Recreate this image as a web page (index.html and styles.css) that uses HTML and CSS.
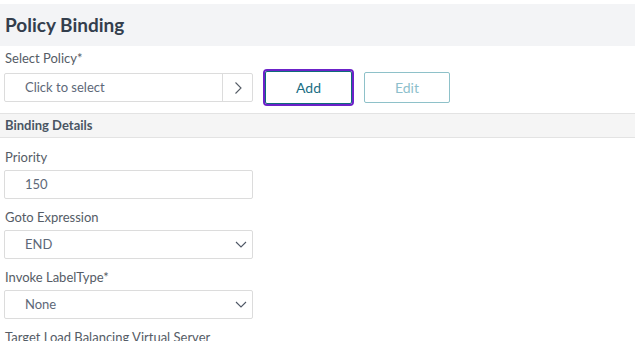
FILE: index.html
```html
<!DOCTYPE html>
<html lang="en">
<head>
  <meta charset="UTF-8">
  <title>Policy Binding</title>
  <link rel="stylesheet" href="styles.css">
</head>
<body>
  <div class="panel">
    <!-- Header -->
    <div class="panel-title">Policy Binding</div>

    <!-- Policy picker -->
    <div class="field policy-field">
      <label class="field-label">Select Policy*</label>
      <div class="policy-row">
        <div class="picker">
          <span class="picker-text">Click to select</span>
          <span class="picker-arrow">
            <svg width="10" height="14" viewBox="0 0 10 14"><path d="M2.5 1.5 L8 7 L2.5 12.5" fill="none" stroke="#555c66" stroke-width="1.1"/></svg>
          </span>
        </div>
        <button class="btn btn-add">Add</button>
        <button class="btn btn-edit">Edit</button>
      </div>
    </div>

    <!-- Binding details -->
    <div class="section-title">Binding Details</div>

    <div class="field">
      <label class="field-label">Priority</label>
      <div class="input">150</div>
    </div>

    <div class="field">
      <label class="field-label">Goto Expression</label>
      <div class="input select">
        <span>END</span>
        <svg width="12" height="7" viewBox="0 0 12 7"><path d="M1 1 L6 6 L11 1" fill="none" stroke="#4f5866" stroke-width="1.1"/></svg>
      </div>
    </div>

    <div class="field">
      <label class="field-label">Invoke LabelType*</label>
      <div class="input select">
        <span>None</span>
        <svg width="12" height="7" viewBox="0 0 12 7"><path d="M1 1 L6 6 L11 1" fill="none" stroke="#4f5866" stroke-width="1.1"/></svg>
      </div>
    </div>

    <div class="field">
      <label class="field-label">Target Load Balancing Virtual Server</label>
    </div>
  </div>
</body>
</html>
```

FILE: styles.css
```css
body {
  margin: 0;
  background: #fff;
  font-family: Lato, "Noto Sans", sans-serif;
  color: #555c66;
  overflow: hidden;
}

.panel {
  display: flex;
  flex-direction: column;
  padding-top: 4px;
}

/* Page header */
.panel-title {
  background: #f3f4f6;
  height: 42px;
  line-height: 42px;
  padding-left: 5px;
  font-size: 19px;
  font-weight: bold;
  color: #333e4d;
}

.field {
  display: flex;
  flex-direction: column;
  padding-left: 4px;
  margin-bottom: 8px;
}

.field-label {
  font-size: 13px;
  line-height: 20px;
  padding-left: 1px;
  margin-bottom: 3px;
  color: #555c66;
}

.policy-field {
  margin-top: 2px;
  margin-bottom: 9px;
}

.policy-row {
  display: flex;
  align-items: center;
  height: 33px;
}

/* Select-policy picker */
.picker {
  display: flex;
  width: 249px;
  height: 29px;
  box-sizing: border-box;
  border: 1px solid #dcdcdc;
  border-radius: 2px;
}

.picker-text {
  flex: 1;
  padding-left: 20px;
  line-height: 27px;
  font-size: 13px;
  color: #5d6878;
}

.picker-arrow {
  width: 29px;
  border-left: 1px solid #dcdcdc;
  display: flex;
  align-items: center;
  justify-content: center;
}

.btn {
  box-sizing: border-box;
  background: #fff;
  font-family: inherit;
  font-size: 14px;
  border-radius: 2px;
  cursor: pointer;
  padding: 0;
}

.btn-add {
  margin-left: 12px;
  width: 87px;
  height: 33px;
  border: 1px solid #0f6b7a;
  border-radius: 2px;
  outline: 2px solid #6c22c9;
  outline-offset: 0;
  color: #1a6e84;
}

.btn-edit {
  margin-left: 12px;
  width: 86px;
  height: 31px;
  border: 1px solid #8ec1c9;
  color: #8dbfcc;
}

/* Section band */
.section-title {
  background: #f5f5f5;
  border-top: 1px solid #e3e3e3;
  border-bottom: 1px solid #e3e3e3;
  height: 23px;
  line-height: 23px;
  padding-left: 5px;
  font-size: 13px;
  font-weight: bold;
  color: #4a5563;
  margin-bottom: 9px;
}

.input {
  width: 249px;
  height: 29px;
  box-sizing: border-box;
  border: 1px solid #dcdcdc;
  border-radius: 2px;
  padding-left: 20px;
  line-height: 27px;
  font-size: 13px;
  color: #5d6878;
}

.select {
  display: flex;
  justify-content: space-between;
  align-items: center;
  padding-right: 5px;
}
```
